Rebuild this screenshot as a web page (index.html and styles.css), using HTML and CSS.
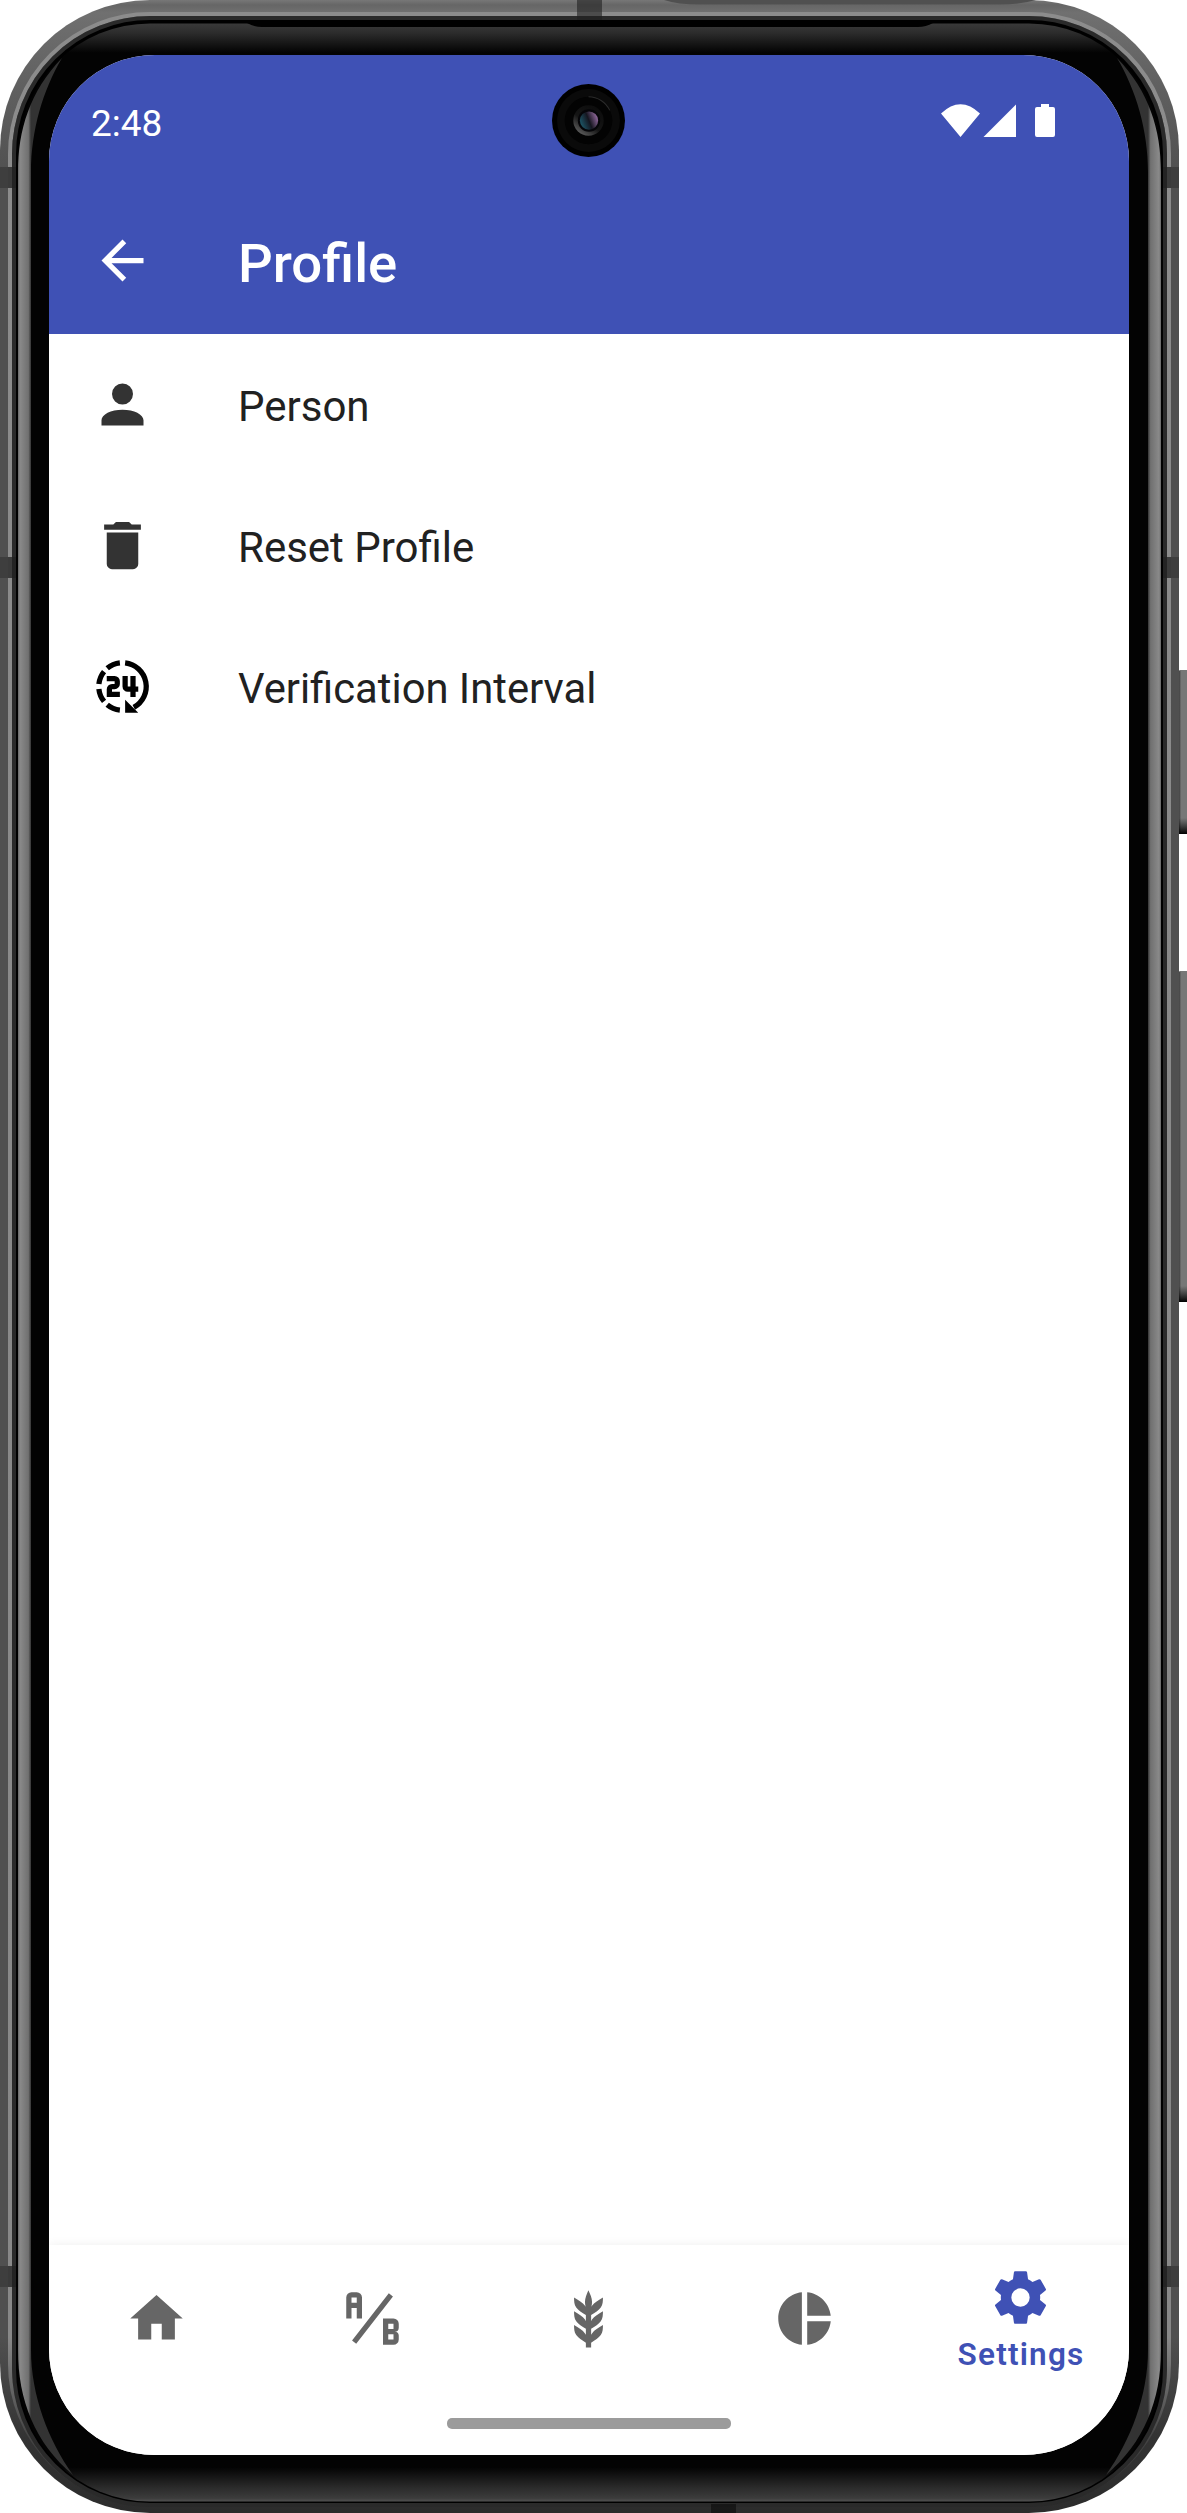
FILE: index.html
```html
<!DOCTYPE html>
<html lang="en">
<head>
<meta charset="utf-8">
<title>Profile</title>
<link rel="stylesheet" href="styles.css">
</head>
<body>
<div class="device">
  <svg class="frame" viewBox="0 0 1187 2513" aria-hidden="true">
    <defs>
      <linearGradient id="shell" x1="0" y1="0" x2="0" y2="2513" gradientUnits="userSpaceOnUse">
        <stop offset="0" stop-color="#777"/><stop offset=".002" stop-color="#666"/><stop offset=".005" stop-color="#707070"/><stop offset=".03" stop-color="#626262"/><stop offset=".07" stop-color="#505050"/><stop offset=".93" stop-color="#505050"/><stop offset=".97" stop-color="#333"/><stop offset="1" stop-color="#2c2c2c"/>
      </linearGradient>
      <linearGradient id="shine" x1="0" y1="0" x2="0" y2="2513" gradientUnits="userSpaceOnUse">
        <stop offset="0" stop-color="#8c8c8c"/><stop offset=".93" stop-color="#888"/><stop offset=".97" stop-color="#444"/><stop offset="1" stop-color="#333"/>
      </linearGradient>
      <linearGradient id="glass" x1="0" y1="23" x2="0" y2="2502" gradientUnits="userSpaceOnUse">
        <stop offset="0" stop-color="#3a3a3a"/><stop offset=".004" stop-color="#2c2c2c"/><stop offset=".012" stop-color="#030303"/><stop offset=".986" stop-color="#030303"/><stop offset=".994" stop-color="#2a2a2a"/><stop offset=".9985" stop-color="#3c3c3c"/><stop offset="1" stop-color="#555"/>
      </linearGradient>
      <linearGradient id="bevelL" x1="18" y1="0" x2="31" y2="0" gradientUnits="userSpaceOnUse">
        <stop offset="0" stop-color="#666"/><stop offset=".15" stop-color="#8a8a8a"/><stop offset=".8" stop-color="#707070"/><stop offset="1" stop-color="#333"/>
      </linearGradient>
      <linearGradient id="key" x1="1178" y1="0" x2="1187" y2="0" gradientUnits="userSpaceOnUse">
        <stop offset="0" stop-color="#222"/><stop offset=".35" stop-color="#777"/><stop offset="1" stop-color="#777"/>
      </linearGradient>
      <linearGradient id="keyEnd" x1="0" y1="0" x2="0" y2="1">
        <stop offset="0" stop-color="#111" stop-opacity="0"/><stop offset="1" stop-color="#000"/>
      </linearGradient>
      <g id="side">
        <path fill="url(#bevelL)" d="M62 58C30 91 18 130 18 172V2350C18 2400 35 2443 73 2475C48 2440 31 2395 31 2350V172C31 130 43 90 62 58Z"/>
        <path fill="#222" fill-opacity=".4" d="M0 167h16v21H0zM0 557h16v21H0zM0 2266h16v21H0z"/>
        <path fill="#222" fill-opacity=".6" d="M8 167h8v21H8zM8 557h8v21H8zM8 2266h8v21H8z"/>
      </g>
    </defs>
    <rect x="1178" y="670" width="11" height="164" rx="3" fill="url(#key)"/>
    <rect x="1178" y="818" width="9" height="16" fill="url(#keyEnd)"/>
    <rect x="1178" y="971" width="11" height="331" rx="3" fill="url(#key)"/>
    <rect x="1178" y="1286" width="9" height="16" fill="url(#keyEnd)"/>
    <rect x="0" y="0" width="1179" height="2513" rx="150" fill="url(#shell)"/>
    <path d="M664 0H1036Q1020 4.500 1000 4.500H700Q678 4.500 664 0Z" fill="#505050"/>
    <rect x="10" y="14" width="1159" height="2490" rx="140" fill="none" stroke="url(#shine)" stroke-width="4"/>
    <rect x="14" y="18" width="1151" height="2487" rx="136" fill="#000" stroke="#2a2a2a" stroke-width="4"/>
    <rect x="18" y="23.500" width="1143" height="2478" rx="132" fill="url(#glass)"/>
    <path d="M247 23H933Q926 27 918 27H262Q254 27 247 23Z" fill="#000"/>
    <use href="#side"/>
    <use href="#side" transform="translate(1179) scale(-1 1)"/>
    <path fill="#222" fill-opacity=".6" d="M577 0h25v20h-25z"/>
    <path fill="#0c0c0c" fill-opacity=".6" d="M711 2504h25v9h-25z"/>
  </svg>

  <main class="screen">
    <header class="top">
      <div class="status">
        <span class="clock">2:48</span>
        <svg class="signals" viewBox="0 0 114 33" aria-hidden="true">
          <path d="M0 9.500Q19.500 -9 39 9.500L19.500 33ZM42.500 33L75 .5V33ZM94 5q0-2 2-2h4V0h8v3h4q2 0 2 2v26q0 2-2 2H96q-2 0-2-2Z"/>
        </svg>
      </div>
      <div class="appbar">
        <svg class="icon" viewBox="0 0 24 24"><path d="M20 11H7.830l5.590-5.590L12 4l-8 8 8 8 1.410-1.410L7.830 13H20z"/></svg>
        <h1 class="title">Profile</h1>
      </div>
    </header>

    <ul class="list">
      <li class="row">
        <svg class="icon" viewBox="0 0 24 24"><path d="M12 4a4 4 0 0 1 0 8 4 4 0 0 1 0-8m0 10c4.420 0 8 1.790 8 4v2H4v-2c0-2.210 3.580-4 8-4"/></svg>
        <span class="label">Person</span>
      </li>
      <li class="row">
        <svg class="icon" viewBox="0 0 24 24"><path d="M19 4h-3.500l-1-1h-5l-1 1H5v2h14M6 19a2 2 0 0 0 2 2h8a2 2 0 0 0 2-2V7H6z"/></svg>
        <span class="label">Reset Profile</span>
      </li>
      <li class="row">
        <svg class="icon icon-solid" viewBox="0 0 24 24">
          <path fill="none" stroke="currentColor" stroke-width="2" d="M13 3A9.050 9.050 0 0 1 16.300 19.950M11 3A9.050 9.050 0 0 0 6.180 5.070M4.970 6.300A9.050 9.050 0 0 0 3 11.050M3 12.950A9.050 9.050 0 0 0 4.970 17.700M6.180 18.930A9.050 9.050 0 0 0 11 21"/>
          <path d="M13 17v5h5zM6 8h3a2 2 0 0 1 2 2v1a2 2 0 0 1-2 2H8v1h3v2H6v-3a2 2 0 0 1 2-2h1v-1H6zM12 8h2v4h1V8h2v4h1v2h-1v2h-2v-2h-1a2 2 0 0 1-2-2z"/>
        </svg>
        <span class="label label-long">Verification Interval</span>
      </li>
    </ul>

    <nav class="nav">
      <div class="tabs">
        <div class="tab"><svg class="icon" viewBox="0 0 24 24"><path d="M10 20v-6h4v6h5v-8h3L12 3 2 12h3v8z"/></svg></div>
        <div class="tab"><svg class="icon" viewBox="0 0 24 24"><path d="M4 2A2 2 0 0 0 2 4V12H4V8H6V12H8V4A2 2 0 0 0 6 2H4M4 4H6V6H4M22 15.500V14A2 2 0 0 0 20 12H16V22H20A2 2 0 0 0 22 20V18.500A1.540 1.540 0 0 0 20.500 17A1.540 1.540 0 0 0 22 15.500M20 20H18V18H20V20M20 16H18V14H20M5.790 21.610L4.210 20.390L18.210 2.390L19.790 3.610Z"/></svg></div>
        <div class="tab"><svg class="icon" viewBox="0 0 24 24"><path d="M7.330 18.330C6.500 17.170 6.500 15.830 6.500 14.500C8.170 15.500 9.830 16.500 10.670 17.670L11 18.230V15.950C9.500 15.050 8.080 14.130 7.330 13.080C6.500 11.920 6.500 10.580 6.500 9.250C8.170 10.250 9.830 11.250 10.670 12.420L11 13V10.700C9.500 9.800 8.080 8.880 7.330 7.830C6.500 6.670 6.500 5.330 6.500 4C8.170 5 9.830 6 10.670 7.170C10.770 7.310 10.860 7.460 10.940 7.620C10.770 7 10.660 6.420 10.650 5.820C10.640 4.310 11.300 2.760 11.960 1.210C12.650 2.690 13.340 4.180 13.350 5.690C13.360 6.320 13.250 6.960 13.070 7.590C13.150 7.450 13.230 7.310 13.330 7.170C14.170 6 15.830 5 17.500 4C17.500 5.330 17.500 6.670 16.670 7.830C15.920 8.880 14.500 9.800 13 10.700V13L13.330 12.420C14.170 11.250 15.830 10.250 17.500 9.250C17.500 10.580 17.500 11.920 16.670 13.080C15.920 14.130 14.500 15.050 13 15.950V18.230L13.330 17.670C14.170 16.500 15.830 15.500 17.500 14.500C17.500 15.830 17.500 17.170 16.670 18.330C15.920 19.380 14.500 20.300 13 21.200V23H11V21.200C9.500 20.300 8.080 19.380 7.330 18.330Z"/></svg></div>
        <div class="tab"><svg class="icon" viewBox="0 0 24 24"><path d="M11 2v20c-5.070-.5-9-4.790-9-10s3.930-9.500 9-10zm2.030 0v8.990H22c-.47-4.740-4.240-8.520-8.970-8.990zm0 11.010V22c4.740-.47 8.500-4.250 8.970-8.990z"/></svg></div>
        <div class="tab tab-active">
          <svg class="icon" viewBox="0 0 24 24"><path d="M12 15.500A3.500 3.500 0 0 1 8.500 12 3.500 3.500 0 0 1 12 8.500a3.500 3.500 0 0 1 3.500 3.500 3.500 3.500 0 0 1-3.500 3.500m7.430-2.530c.04-.32.07-.64.07-.97s-.03-.66-.07-1l2.110-1.630c.19-.15.24-.42.12-.64l-2-3.460c-.12-.22-.39-.31-.61-.22l-2.490 1c-.52-.39-1.060-.73-1.690-.98l-.37-2.650A.506.506 0 0 0 14 2h-4c-.25 0-.46.18-.5.42l-.37 2.650c-.63.25-1.170.59-1.690.98l-2.490-1c-.22-.09-.49 0-.61.22l-2 3.460c-.13.22-.07.49.12.64L4.570 11c-.04.34-.07.67-.07 1s.03.65.07.97l-2.110 1.660c-.19.15-.25.42-.12.64l2 3.460c.12.22.39.300.61.220l2.490-1.010c.52.400 1.060.740 1.690.990l.37 2.650c.04.240.250.420.500.420h4c.250 0 .460-.180.500-.420l.370-2.650c.630-.260 1.170-.590 1.690-.990l2.490 1.010c.220.080.490 0 .610-.220l2-3.460c.120-.220.070-.490-.120-.640z"/></svg>
          <span class="tab-label">Settings</span>
        </div>
      </div>
      <div class="gesture"><span class="handle"></span></div>
    </nav>
  </main>

  <svg class="camera" viewBox="0 0 72 72" aria-hidden="true">
    <defs>
      <linearGradient id="lens" x1="0" y1=".7" x2="1" y2=".3"><stop offset="0" stop-color="#1d5a6b"/><stop offset=".5" stop-color="#15151f"/><stop offset="1" stop-color="#9a6fa5"/></linearGradient>
      <linearGradient id="rim" x1="0" y1="1" x2=".7" y2="0"><stop offset="0" stop-color="#777"/><stop offset=".5" stop-color="#151515"/><stop offset="1" stop-color="#0c0c0c"/></linearGradient>
    </defs>
    <circle cx="36" cy="36" r="36" fill="#000"/>
    <circle cx="36" cy="36" r="31" fill="#0a0a0a"/>
    <circle cx="36" cy="36" r="23.500" fill="#030303"/>
    <path d="M36 12.500A23.500 23.500 0 0 1 57 26" fill="none" stroke="#2b2b2b"/>
    <circle cx="36" cy="36" r="15" fill="url(#rim)"/>
    <circle cx="36.500" cy="36" r="11" fill="#050508"/>
    <circle cx="36.500" cy="36" r="9" fill="url(#lens)"/>
  </svg>
</div>
</body>
</html>
```
FILE: styles.css
```css
* { box-sizing: border-box; }

body {
  margin: 0;
  background: #fff;
  font-family: Roboto, "Liberation Sans", sans-serif;
}

.device {
  position: relative;
  width: 1187px;
  height: 2513px;
  padding: 55px 58px 58px 49px;
  overflow: hidden;
}

.frame {
  position: absolute;
  inset: 0;
  width: 1187px;
  height: 2513px;
}

.screen {
  position: relative;
  display: flex;
  flex-direction: column;
  width: 1080px;
  height: 2400px;
  border-radius: 106px;
  overflow: hidden;
  background: #fff;
}

/* the front camera sits over the status bar */
.camera {
  position: absolute;
  left: 552px;
  top: 84px;
  width: 73px;
  height: 73px;
}

.icon {
  display: block;
  flex: none;
  width: 63px;
  height: 63px;
  fill: currentColor;
}

.top {
  background: #3f51b5;
  color: #fff;
}

.status {
  display: flex;
  align-items: center;
  justify-content: space-between;
  height: 136px;
  padding: 0 74px 0 42px;
}

.clock {
  padding-top: 1px;
  font-size: 37px;
  line-height: 44px;
}

.signals {
  width: 114px;
  height: 33px;
  margin-bottom: 5px;
  fill: #fff;
}

.appbar {
  display: flex;
  align-items: center;
  gap: 84px;
  height: 143px;
  padding-left: 42px;
}

.appbar .icon { margin-bottom: 5px; }

.title {
  margin: 0;
  font-size: 54.5px;
  font-weight: 500;
}

.list {
  flex: 1;
  margin: 0;
  padding: 0;
  list-style: none;
}

.row {
  display: flex;
  align-items: center;
  gap: 84px;
  height: 141px;
  padding-left: 42px;
  color: #333;
}

.icon-solid { color: #000; }

.label {
  padding-top: 4px;
  font-size: 42px;
  color: #212121;
}

.label-long { font-size: 41.75px; }

.nav {
  height: 210px;
  background: #fff;
  box-shadow: 0 0 10px rgba(0, 0, 0, .07);
}

.tabs {
  display: grid;
  grid-template-columns: repeat(5, 1fr);
  height: 147px;
}

.tab {
  display: flex;
  flex-direction: column;
  align-items: center;
  justify-content: center;
  padding-right: 1px;
  color: #666;
}

.tab-active { color: #3f51b5; }

.tab-label {
  margin-top: 7px;
  margin-bottom: -1px;
  padding-left: 1px;
  font-size: 31.5px;
  font-weight: 600;
  line-height: 37px;
  letter-spacing: 1.2px;
}

.gesture {
  display: flex;
  align-items: center;
  justify-content: center;
  height: 63px;
}

.handle {
  width: 284px;
  height: 11px;
  border-radius: 5px;
  background: #9b9b9b;
}
```
